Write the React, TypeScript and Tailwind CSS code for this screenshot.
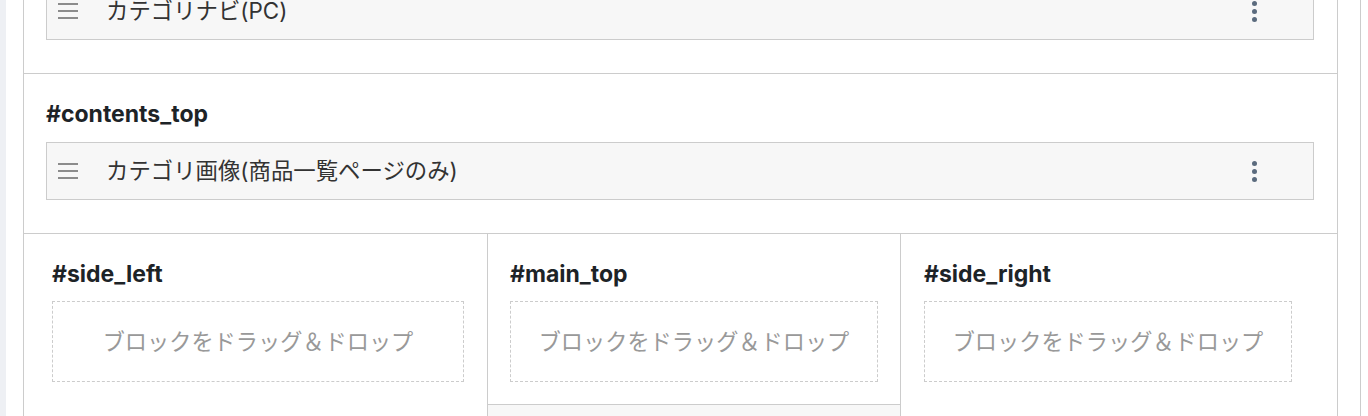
const font = "font-['Inter','Noto_Sans_CJK_JP',sans-serif]";

function Handle() {
  return (
    <div className="flex w-5 flex-col gap-[5px]">
      <span className="h-[2px] w-5 bg-[#8c8c8c]" />
      <span className="h-[2px] w-5 bg-[#8c8c8c]" />
      <span className="h-[2px] w-5 bg-[#8c8c8c]" />
    </div>
  );
}

function Dots() {
  return (
    <div className="flex flex-col items-center gap-[3px]">
      <span className="h-[5px] w-[5px] rounded-full bg-[#5b6b7e]" />
      <span className="h-[5px] w-[5px] rounded-full bg-[#5b6b7e]" />
      <span className="h-[5px] w-[5px] rounded-full bg-[#5b6b7e]" />
    </div>
  );
}

function BlockRow({ label }: { label: string }) {
  return (
    <div className="flex h-[58px] items-center border border-[#ccc] bg-[#f7f7f7] pl-[11px] pr-[56px]">
      <Handle />
      <span className="ml-[28px] flex-1 text-[22.4px] text-[#333]">{label}</span>
      <Dots />
    </div>
  );
}

function DropZone() {
  return (
    <div className="flex h-[81px] items-center justify-center border border-dashed border-[#ccc] text-[22.2px] text-[#999]">
      ブロックをドラッグ＆ドロップ
    </div>
  );
}

function Heading({ children }: { children: string }) {
  return <h3 className="text-[23px] leading-[28px] font-bold text-[#1d2327]">{children}</h3>;
}

export default function App() {
  return (
    <div className={`flex h-[416px] w-[1368px] overflow-hidden bg-white ${font}`}>
      <div className="w-[6px] shrink-0 bg-[#eef0f4]" />
      <div className="w-[17px] shrink-0" />

      {/* layout editor canvas */}
      <div className="w-[1315px] shrink-0 border-x border-[#ccc]">
        <div className="-mt-[18px] border-b border-[#ccc] pl-[22px] pr-[23px] pb-[33px]">
          <BlockRow label="カテゴリナビ(PC)" />
        </div>

        <div className="border-b border-[#ccc] pl-[22px] pr-[23px] pt-[26px] pb-[33px]">
          <Heading>#contents_top</Heading>
          <div className="mt-[14px]">
            <BlockRow label="カテゴリ画像(商品一覧ページのみ)" />
          </div>
        </div>

        <div className="flex">
          <div className="w-[464px] shrink-0 border-r border-[#ccc] pt-[26px] pl-[28px] pr-[23px]">
            <Heading>#side_left</Heading>
            <div className="mt-[13px]">
              <DropZone />
            </div>
          </div>

          <div className="flex w-[413px] shrink-0 flex-col border-r border-[#ccc]">
            <div className="border-b border-[#ccc] pt-[26px] pb-[22px] pl-[22px] pr-[22px]">
              <Heading>#main_top</Heading>
              <div className="mt-[13px]">
                <DropZone />
              </div>
            </div>
            <div className="h-[60px] bg-[#f7f7f7]" />
          </div>

          <div className="flex-1 pt-[26px] pl-[23px] pr-[45px]">
            <Heading>#side_right</Heading>
            <div className="mt-[13px]">
              <DropZone />
            </div>
          </div>
        </div>
      </div>

      <div className="w-[22px] shrink-0" />
      <div className="w-px shrink-0 bg-[#ccc]" />
    </div>
  );
}
